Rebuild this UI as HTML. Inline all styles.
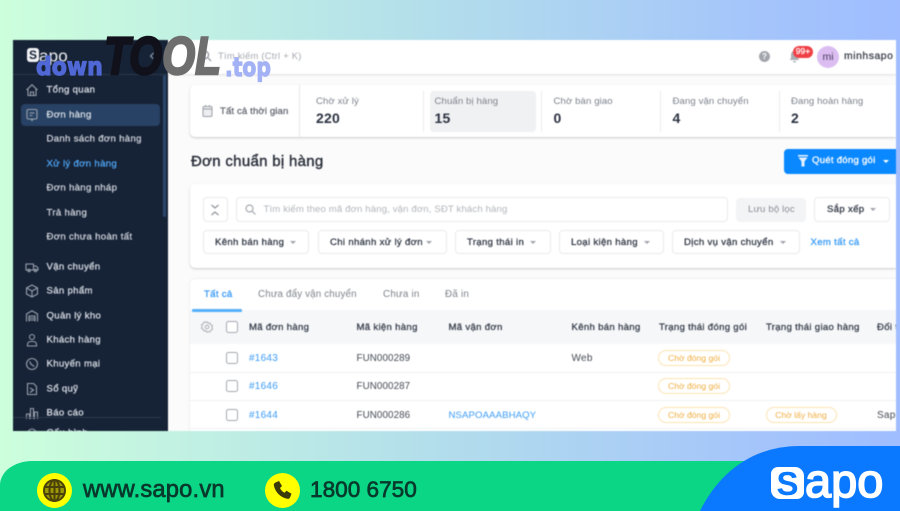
<!DOCTYPE html>
<html lang="vi">
<head>
<meta charset="utf-8">
<title>Sapo</title>
<style>
html,body{margin:0;padding:0}
body{width:900px;height:511px;overflow:hidden;position:relative;font-family:"Liberation Sans","DejaVu Sans",sans-serif;background:linear-gradient(90deg,#ccffdc 0%,#b4e0ea 45%,#a4c4fb 85%,#9fbdff 100%)}
#screen{position:absolute;left:13px;top:40px;width:883px;height:391px;background:#fbfbfb;overflow:hidden;filter:blur(.4px)}
.t{position:absolute;white-space:nowrap;line-height:14px;font-size:10px;color:#2a3140;letter-spacing:.25px}
.m{-webkit-text-stroke:.3px currentColor;font-size:9.6px;letter-spacing:.32px}
.abs{position:absolute;box-sizing:border-box}
#side{left:0;top:0;width:155px;height:391px;background:#162236}
#side .t{color:#d5dae2;left:33.5px;transform:translateY(.7px)}
#side svg{position:absolute;left:12px;width:14px;height:14px;fill:none;stroke:#98a1ad;stroke-width:1.1}
.card{background:#fff;box-shadow:0 1px 2px rgba(0,0,0,.2);border-radius:5px}
.sel{background:#fff;border:1px solid #e8eaed;border-radius:4px;height:25px}
.sel .t{top:5px;color:#333a47;-webkit-text-stroke:.3px currentColor;font-size:9.6px;letter-spacing:.32px}
.car{position:absolute;width:0;height:0;border-left:3px solid transparent;border-right:3px solid transparent;border-top:3px solid #a0a4ab}
.cb{position:absolute;left:213px;width:12px;height:12px;box-sizing:border-box;border:1.5px solid #a4a8af;border-radius:2.5px;background:#fff}
.lnk{color:#3a9bf5}
.pill{position:absolute;height:16px;box-sizing:border-box;border:1px solid #fde3b0;border-radius:8px;background:#fff;color:#f0ae3f;font-size:8.6px;line-height:14px;text-align:center;white-space:nowrap}
.hd{-webkit-text-stroke:.3px currentColor;color:#3a414e;font-size:9.6px;letter-spacing:.3px}
.row{position:absolute;left:177px;width:706px;height:1px;background:#f0f1f3}
.lab{color:#7b818b;font-size:9.6px;letter-spacing:.1px}
.num{font-size:14px;font-weight:bold;color:#2a3140;letter-spacing:.2px}
#foot{position:absolute;left:0;top:461px;width:900px;height:50px;background:#0bd685;border-top-left-radius:32px 24px}
#blue{position:absolute;left:0;top:0}
.ftxt{position:absolute;line-height:26px;color:#08392c;white-space:nowrap;-webkit-text-stroke:.7px currentColor;filter:blur(.3px)}
.wm{position:absolute;font-weight:bold;white-space:nowrap;line-height:1}
</style>
</head>
<body>
<div id="screen">
  <!-- top bar -->
  <div class="abs" style="left:155px;top:0;width:728px;height:34px;background:#fff;box-shadow:0 1px 2px rgba(0,0,0,.12)"></div>
  <svg class="abs" style="left:187px;top:10px" width="12" height="12" viewBox="0 0 12 12" fill="none" stroke="#8a9099" stroke-width="1.2"><circle cx="5" cy="5" r="3.6"/><path d="M8 8l3 3"/></svg>
  <div class="t" style="left:205px;top:9px;color:#a5a9b0;font-size:9.4px">Tìm kiếm (Ctrl + K)</div>
  <div class="abs" style="left:746px;top:11px;width:11px;height:11px;border-radius:50%;background:#a2a6ac;color:#fff;font-size:8px;font-weight:bold;line-height:11px;text-align:center">?</div>
  <svg class="abs" style="left:776px;top:11px" width="11" height="12" viewBox="0 0 11 12"><path d="M5.5 0C3 0 2 2 2 4v3L.8 9h9.4L9 7V4C9 2 8 0 5.5 0zM4 10h3a1.500 1.500 0 0 1-3 0z" fill="#a8adb4"/></svg>
  <div class="abs" style="left:780px;top:5.5px;width:20px;height:12px;background:#ef3f45;border-radius:6px;color:#fff;font-size:8.5px;line-height:11.5px;text-align:center;-webkit-text-stroke:.2px #fff">99+</div>
  <div class="abs" style="left:804px;top:5.5px;width:22px;height:22px;background:#dbbdf2;border-radius:50%;color:#4a3b5c;font-size:10.5px;line-height:22px;text-align:center">mi</div>
  <div class="t" style="left:831px;top:9.5px;font-size:10.4px;-webkit-text-stroke:.3px currentColor;color:#3c424d;letter-spacing:.55px">minhsapo</div>

  <!-- stats card -->
  <div class="abs card" style="left:177px;top:45px;width:706px;height:52px;border-radius:5px 0 0 5px"></div>
  <div class="abs" style="left:286px;top:45px;width:1px;height:52px;background:#e6e7ea"></div>
  <svg class="abs" style="left:189px;top:65px" width="11" height="12" viewBox="0 0 11 12" fill="#eceef0" stroke="#9a9fa6" stroke-width="1"><rect x="1" y="1.500" width="9" height="10" rx="1"/><path d="M1 4h9M3.500 0v2M7.500 0v2"/></svg>
  <div class="t" style="left:207px;top:65px;color:#5b616b;font-size:9.6px;-webkit-text-stroke:.2px currentColor;letter-spacing:.12px">Tất cả thời gian</div>
  <div class="abs" style="left:410px;top:51px;width:1px;height:41px;background:#eceded"></div>
  <div class="abs" style="left:417px;top:51px;width:106px;height:41px;background:#f0f1f2;border-radius:4px"></div>
  <div class="abs" style="left:528px;top:51px;width:1px;height:41px;background:#eceded"></div>
  <div class="abs" style="left:647px;top:51px;width:1px;height:41px;background:#eceded"></div>
  <div class="abs" style="left:766px;top:51px;width:1px;height:41px;background:#eceded"></div>
  <div class="t lab" style="left:303px;top:54.5px">Chờ xử lý</div><div class="t num" style="left:303px;top:71px">220</div>
  <div class="t lab" style="left:421.5px;top:54.5px">Chuẩn bị hàng</div><div class="t num" style="left:421.5px;top:71px">15</div>
  <div class="t lab" style="left:540.5px;top:54.5px">Chờ bàn giao</div><div class="t num" style="left:540.5px;top:71px">0</div>
  <div class="t lab" style="left:659.5px;top:54.5px">Đang vận chuyển</div><div class="t num" style="left:659.5px;top:71px">4</div>
  <div class="t lab" style="left:778px;top:54.5px">Đang hoàn hàng</div><div class="t num" style="left:778px;top:71px">2</div>

  <!-- heading -->
  <div class="t" style="left:178px;top:112.5px;font-size:15px;line-height:18px;-webkit-text-stroke:.4px currentColor;color:#2a2f3a;letter-spacing:.3px">Đơn chuẩn bị hàng</div>
  <div class="abs" style="left:771px;top:108.5px;width:112px;height:25px;background:#0a88ff;border-radius:4px 0 0 4px"></div>
  <svg class="abs" style="left:785px;top:115px" width="10" height="12" viewBox="0 0 10 12" fill="#e6f2ff"><path d="M0 0h10v1.500H0zM.5 2.500h9L6.500 6.500v5h-3v-5z"/></svg>
  <div class="t m" style="left:799px;top:114px;color:#fff;letter-spacing:.25px">Quét đóng gói</div>
  <div class="car" style="left:870px;top:119.5px;border-top-color:#fff"></div>

  <!-- filter card -->
  <div class="abs card" style="left:177px;top:144px;width:706px;height:84px;border-radius:5px 0 0 5px"></div>
  <div class="abs sel" style="left:190px;top:157px;width:25px;height:25px"></div>
  <svg class="abs" style="left:197px;top:164px" width="10" height="12" viewBox="0 0 10 12" fill="none" stroke="#8d9299" stroke-width="1.200"><path d="M1.500 1l3.500 3 3.500-3M1.500 11l3.500-3 3.500 3"/></svg>
  <div class="abs sel" style="left:223px;top:157px;width:492px;height:25px"></div>
  <svg class="abs" style="left:232px;top:164px" width="11" height="11" viewBox="0 0 11 11" fill="none" stroke="#a7abb1" stroke-width="1.200"><circle cx="4.500" cy="4.500" r="3.500"/><path d="M7.200 7.200L10.500 10.500"/></svg>
  <div class="t" style="left:250.5px;top:163px;color:#b1b5ba;font-size:9.6px;letter-spacing:.13px">Tìm kiếm theo mã đơn hàng, vận đơn, SĐT khách hàng</div>
  <div class="abs" style="left:723px;top:157.5px;width:70px;height:24px;background:#f3f4f6;border-radius:4px"></div>
  <div class="t" style="left:735px;top:163px;color:#878c94;font-size:9.6px;letter-spacing:.15px">Lưu bộ lọc</div>
  <div class="abs sel" style="left:801px;top:157px;width:76px;height:25px"><div class="t" style="left:12px;top:5px">Sắp xếp</div><div class="car" style="left:55px;top:10px"></div></div>

  <div class="abs sel" style="left:190px;top:190px;width:106px;height:24px"><div class="t" style="left:11px;top:4.500px">Kênh bán hàng</div><div class="car" style="left:86px;top:10px"></div></div>
  <div class="abs sel" style="left:305px;top:190px;width:129px;height:24px"><div class="t" style="left:11px;top:4.500px">Chi nhánh xử lý đơn</div><div class="car" style="left:107px;top:10px"></div></div>
  <div class="abs sel" style="left:442px;top:190px;width:96px;height:24px"><div class="t" style="left:11px;top:4.500px">Trạng thái in</div><div class="car" style="left:74px;top:10px"></div></div>
  <div class="abs sel" style="left:546px;top:190px;width:105px;height:24px"><div class="t" style="left:11px;top:4.500px">Loại kiện hàng</div><div class="car" style="left:84px;top:10px"></div></div>
  <div class="abs sel" style="left:659px;top:190px;width:128px;height:24px"><div class="t" style="left:11px;top:4.500px">Dịch vụ vận chuyển</div><div class="car" style="left:107px;top:10px"></div></div>
  <div class="t lnk m" style="left:797.5px;top:195.5px">Xem tất cả</div>

  <!-- table card -->
  <div class="abs" style="left:177px;top:239px;width:706px;height:152px;background:#fff;box-shadow:0 0 2px rgba(0,0,0,.12);border-radius:5px 0 0 0"></div>
  <div class="t m" style="left:191px;top:248px;color:#3a9bf5">Tất cả</div>
  <div class="t" style="left:245px;top:248px;color:#7d828a;font-size:9.8px;letter-spacing:.15px">Chưa đẩy vận chuyển</div>
  <div class="t" style="left:370px;top:248px;color:#7d828a;font-size:9.8px">Chưa in</div>
  <div class="t" style="left:432px;top:248px;color:#7d828a;font-size:9.8px">Đã in</div>
  <div class="abs" style="left:177px;top:270px;width:706px;height:34px;background:#f6f7f9"></div>
  <div class="abs" style="left:179px;top:269px;width:50px;height:2.5px;background:#55b0fb;border-radius:1px"></div>
  <svg class="abs" style="left:188px;top:281px" width="12" height="12" viewBox="0 0 12 12" fill="none" stroke="#a9adb3" stroke-width="1"><circle cx="6" cy="6" r="1.800"/><path d="M6 .8l1.200 1.500 1.900-.3.700 1.800 1.700.9-.6 1.800.6 1.800-1.700.9-.7 1.700-1.900-.2L6 11.200l-1.200-1.500-1.900.2-.7-1.700-1.700-.9.600-1.800-.600-1.800 1.700-.9.700-1.800 1.900.3z"/></svg>
  <div class="cb" style="top:281px"></div>
  <div class="t hd" style="left:236px;top:280.5px">Mã đơn hàng</div>
  <div class="t hd" style="left:343.5px;top:280.5px">Mã kiện hàng</div>
  <div class="t hd" style="left:435.5px;top:280.5px">Mã vận đơn</div>
  <div class="t hd" style="left:558.5px;top:280.5px">Kênh bán hàng</div>
  <div class="t hd" style="left:646px;top:280.5px">Trạng thái đóng gói</div>
  <div class="t hd" style="left:753px;top:280.5px">Trạng thái giao hàng</div>
  <div class="t hd" style="left:864px;top:280.5px">Đối tác</div>

  <div class="row" style="top:332px"></div>
  <div class="row" style="top:360px"></div>
  <div class="row" style="top:388px"></div>

  <div class="cb" style="top:312px"></div>
  <div class="t lnk" style="left:236px;top:311.5px;font-size:10px">#1643</div>
  <div class="t" style="left:343.5px;top:311.5px;color:#444a54;font-size:9.8px;letter-spacing:.1px">FUN000289</div>
  <div class="t" style="left:558.5px;top:311.5px;color:#444a54">Web</div>
  <div class="pill" style="left:645px;top:310px;width:72px">Chờ đóng gói</div>

  <div class="cb" style="top:340px"></div>
  <div class="t lnk" style="left:236px;top:340px;font-size:10px">#1646</div>
  <div class="t" style="left:343.5px;top:340px;color:#444a54;font-size:9.8px;letter-spacing:.1px">FUN000287</div>
  <div class="pill" style="left:645px;top:338px;width:72px">Chờ đóng gói</div>

  <div class="cb" style="top:369px"></div>
  <div class="t lnk" style="left:236px;top:368.5px;font-size:10px">#1644</div>
  <div class="t" style="left:343.5px;top:368.5px;color:#444a54;font-size:9.8px;letter-spacing:.1px">FUN000286</div>
  <div class="t lnk" style="left:435.5px;top:368.5px;font-size:9.6px;letter-spacing:.1px">NSAPOAAABHAQY</div>
  <div class="pill" style="left:645px;top:366.5px;width:72px">Chờ đóng gói</div>
  <div class="pill" style="left:752.5px;top:366.5px;width:71px">Chờ lấy hàng</div>
  <div class="t" style="left:864px;top:368.5px;color:#444a54">Sapo</div>

  <!-- sidebar -->
  <div class="abs" id="side">
    <div class="abs" style="left:0;top:34px;width:155px;height:1px;background:#2a3649"></div>
    <div class="abs" style="left:14px;top:8px;width:12px;height:14px;background:#f1f3f5;border-radius:3px;color:#162236;font-size:12px;font-weight:bold;line-height:14px;text-align:center">S</div>
    <div class="t" style="top:7px;font-size:17px;line-height:18px;color:#f1f3f5;letter-spacing:.2px;left:26px">apo</div>
    <svg style="left:135px;top:11px;width:8px;height:10px" viewBox="0 0 8 10"><path d="M5.500 2L2.500 5l3 3"/></svg>

    <svg style="top:43px" viewBox="0 0 14 14"><path d="M1.500 7L7 1.800 12.500 7M3 6v6.500h8V6M5.500 12.500V9h3v3.500"/></svg>
    <div class="t m" style="top:43px">Tổng quan</div>

    <div class="abs" style="left:8px;top:64px;width:139px;height:21.5px;background:#274264;border-radius:4px"></div>
    <svg style="top:67.5px" viewBox="0 0 14 14"><rect x="2" y="1.500" width="10" height="9.500" rx="1.500"/><path d="M4.500 5h5M4.500 7.500h3M6 11l1 1.500 1-1.500"/></svg>
    <div class="t m" style="top:67.5px">Đơn hàng</div>
    <div class="t m" style="top:92px;color:#c9ced6">Danh sách đơn hàng</div>
    <div class="t m" style="top:116.5px;color:#4fa3ef">Xử lý đơn hàng</div>
    <div class="t m" style="top:141px;color:#c9ced6">Đơn hàng nháp</div>
    <div class="t m" style="top:165.5px;color:#c9ced6">Trả hàng</div>
    <div class="t m" style="top:189.5px;color:#c9ced6">Đơn chưa hoàn tất</div>

    <svg style="top:219.5px" viewBox="0 0 14 14"><path d="M1 4h7.500v6H1zM8.500 6h2.500l2 2v2h-4.500"/><circle cx="4" cy="10.500" r="1.200"/><circle cx="10.500" cy="10.500" r="1.200"/></svg>
    <div class="t m" style="top:219.5px">Vận chuyển</div>
    <svg style="top:244px" viewBox="0 0 14 14"><path d="M7 1l5.500 3v6L7 13 1.500 10V4zM1.500 4L7 7l5.500-3M7 7v6"/></svg>
    <div class="t m" style="top:244px">Sản phẩm</div>
    <svg style="top:268.5px" viewBox="0 0 14 14"><path d="M1.500 12.500V5L7 1.800 12.500 5v7.500M4 12.500V7h6v5.500M4 9h6M4 11h6"/></svg>
    <div class="t m" style="top:268.5px">Quản lý kho</div>
    <svg style="top:292.5px" viewBox="0 0 14 14"><circle cx="7" cy="4" r="2.500"/><path d="M2.500 13v-1.500A3 3 0 0 1 5.500 8.500h3a3 3 0 0 1 3 3V13z"/></svg>
    <div class="t m" style="top:292.5px">Khách hàng</div>
    <svg style="top:317px" viewBox="0 0 14 14"><circle cx="7" cy="7" r="5.500"/><path d="M4.800 4.500l1 2.500 3.400 2.500"/></svg>
    <div class="t m" style="top:317px">Khuyến mại</div>
    <svg style="top:341.5px" viewBox="0 0 14 14"><path d="M2.500 1.500h6l3 3v8h-9zM5 6l3.500 2L5 10.500"/></svg>
    <div class="t m" style="top:341.5px">Sổ quỹ</div>
    <svg style="top:366px" viewBox="0 0 14 14"><path d="M1.500 13V8h3v5M5.500 13V2.500h3V13M9.500 13V6h3v7"/></svg>
    <div class="t m" style="top:366px">Báo cáo</div>
    <svg style="top:386px" viewBox="0 0 14 14"><circle cx="7" cy="7" r="4"/></svg>
    <div class="t m" style="top:386px">Cấu hình</div>
    <div class="abs" style="left:0;top:376.5px;width:148px;height:1px;background:#2c394c"></div>
    <div class="abs" style="left:150px;top:35px;width:3px;height:142px;background:#2b476b;border-radius:2px"></div>
  </div>
</div>

<!-- watermark -->
<div class="wm" style="left:36px;top:54px;font-size:25px;color:#5068d6;font-family:'DejaVu Sans',sans-serif;-webkit-text-stroke:1.2px currentColor;transform:scaleX(.88);transform-origin:left top;filter:blur(.3px)">down</div>
<div class="wm" style="left:104px;top:30px;font-size:53px;font-style:italic;-webkit-text-stroke:2.4px currentColor;transform:scaleX(.8);transform-origin:left top;filter:blur(.3px)"><span style="color:#10111a">TO</span><span style="color:#6e6e6e">OL</span></div>
<div class="wm" style="left:225px;top:55px;font-size:26px;color:#a3b1f5;font-family:'DejaVu Sans',sans-serif;-webkit-text-stroke:1.2px currentColor;transform:scaleX(.78);transform-origin:left top;filter:blur(.3px)">.top</div>

<!-- footer -->
<div id="foot"></div>
<svg id="blue" width="900" height="511" viewBox="0 0 900 511"><path d="M700 511C718 475 750 446 800 446H900V511Z" fill="#0a78ff"/></svg>

<svg class="abs" style="left:37px;top:473px" width="35" height="35" viewBox="0 0 35 35"><circle cx="17.500" cy="17.500" r="17.500" fill="#ffff00"/><g fill="none" stroke="#4a4208" stroke-width="2"><circle cx="17.500" cy="17.500" r="10.500" fill="#4a4208" fill-opacity=".55"/><ellipse cx="17.500" cy="17.500" rx="5" ry="10.500"/><path d="M7 14h21M7 21h21M17.500 7v21"/></g></svg>
<div class="ftxt" style="left:83px;top:477px;font-size:23.7px;letter-spacing:.2px">www.sapo.vn</div>
<svg class="abs" style="left:265px;top:473px" width="35" height="35" viewBox="0 0 35 35"><circle cx="17.500" cy="17.500" r="17.500" fill="#ffff00"/><path d="M10.500 9.500l3.500-1.500 3 5-2 2c.8 2 2.500 3.800 4.500 4.800l2-2 5 3-1.500 3.700c-.5 1-1.500 1.500-2.500 1.300C15.500 24.500 10 19 8.800 12c-.1-1 .5-2 1.700-2.500z" fill="#3a3a0a"/></svg>
<div class="ftxt" style="left:310px;top:477px;font-size:22.6px">1800 6750</div>

<!-- Sapo logo -->
<div class="abs" style="left:771px;top:467px;width:33px;height:32px;background:#fff;border-radius:7px 9px 7px 9px;color:#0a78ff;font-size:33px;line-height:33px;font-weight:bold;text-align:center;filter:blur(.3px)">S</div>
<div class="abs" style="left:805px;top:456px;color:#fff;font-size:47px;line-height:50px;-webkit-text-stroke:1.6px #fff;white-space:nowrap;filter:blur(.3px)">apo</div>
</body>
</html>
